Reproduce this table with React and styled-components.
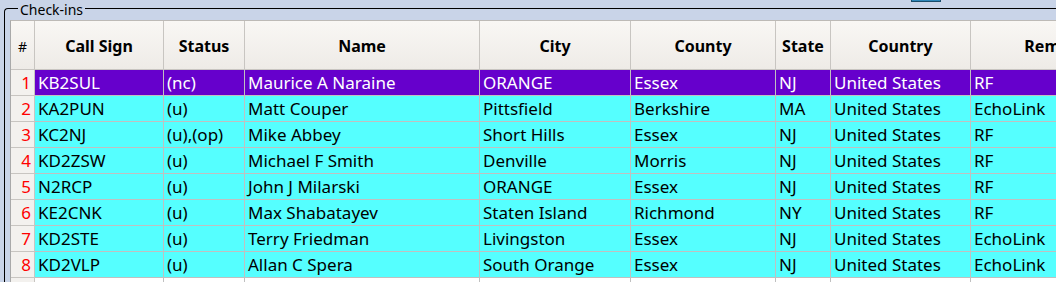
import React from "react";
import styled, { createGlobalStyle } from "styled-components";

const GlobalStyle = createGlobalStyle`
    html, body {
        margin: 0;
        padding: 0;
        background: #c9d4e8;
        overflow: hidden;
    }
    body {
        font-family: "Noto Sans", "DejaVu Sans", sans-serif;
        width: 1056px;
        height: 282px;
    }
`;

const Page = styled.div`
    width: 1056px;
    height: 282px;
    overflow: hidden;
`;

// trozo de boton que asoma arriba
const TopStrip = styled.div`
    height: 0;
    overflow: visible;
    position: relative;
    z-index: 2;

    span{
        display: block;
        margin-left: 911px;
        width: 30px;
        height: 2px;
        background: #2e86b8;
        border: 1px solid #1b4d6b;
        border-top: none;
        box-sizing: border-box;
    }
`;

const Group = styled.fieldset`
    margin: -2px 0 0 4px;
    padding: 2px 0 0 5px;
    border: 1px solid #000;
    border-right: none;
    border-bottom: none;
    border-top-left-radius: 4px;
    min-width: 0;
    height: 300px;
    box-sizing: border-box;

    legend{
        margin-left: 8px;
        padding: 4px 2px 0;
        font-size: 14px;
        line-height: 16px;
        color: #000;
    }
`;

const COLS = "24px 129px 81px 235px 151px 145px 55px 140px 178px";

const Grid = styled.div`
    border-top: 1px solid #bdbab6;
    border-left: 1px solid #a9a9a9;
    background: #fff;
    width: max-content;
`;

const Row = styled.div`
    display: grid;
    grid-template-columns: ${COLS};
    height: ${p => p.$h}px;
`;

const HeadCell = styled.div`
    display: flex;
    align-items: center;
    justify-content: center;
    box-sizing: border-box;
    padding-top: 2px;
    background: linear-gradient(#f9f7f4, #eeebe7);
    border-right: 1px solid #c8c5c1;
    border-bottom: 1px solid #c8c5c1;
    font-size: ${p => p.$small ? 14 : 16}px;
    font-weight: ${p => p.$small ? 400 : 700};
    color: #000;
    white-space: nowrap;
    overflow: hidden;
`;

const NumCell = styled.div`
    display: flex;
    align-items: center;
    justify-content: flex-end;
    box-sizing: border-box;
    padding-right: 3px;
    background: #f3f1ee;
    border-right: 1px solid #c8c5c1;
    border-bottom: 1px solid #c8c5c1;
    color: #ff0000;
    font-size: 17px;
`;

const Cell = styled.div`
    display: flex;
    align-items: center;
    box-sizing: border-box;
    padding-left: 3px;
    background: ${p => p.$sel ? "#6600cc" : p.$empty ? "#fff" : "#55ffff"};
    color: ${p => p.$sel ? "#fff" : "#000"};
    border-right: 1px solid #c0c0c0;
    border-bottom: 1px solid #c0c0c0;
    font-size: 17px;
    white-space: nowrap;
    overflow: hidden;
`;

const headers = ["Call Sign", "Status", "Name", "City", "County", "State", "Country", "Remarks"];

const rows = [
    ["KB2SUL", "(nc)", "Maurice A Naraine", "ORANGE", "Essex", "NJ", "United States", "RF"],
    ["KA2PUN", "(u)", "Matt Couper", "Pittsfield", "Berkshire", "MA", "United States", "EchoLink"],
    ["KC2NJ", "(u),(op)", "Mike Abbey", "Short Hills", "Essex", "NJ", "United States", "RF"],
    ["KD2ZSW", "(u)", "Michael F Smith", "Denville", "Morris", "NJ", "United States", "RF"],
    ["N2RCP", "(u)", "John J Milarski", "ORANGE", "Essex", "NJ", "United States", "RF"],
    ["KE2CNK", "(u)", "Max Shabatayev", "Staten Island", "Richmond", "NY", "United States", "RF"],
    ["KD2STE", "(u)", "Terry Friedman", "Livingston", "Essex", "NJ", "United States", "EchoLink"],
    ["KD2VLP", "(u)", "Allan C Spera", "South Orange", "Essex", "NJ", "United States", "EchoLink"],
];

const App = () => {
    return (
        <Page>
            <GlobalStyle />
            <TopStrip><span /></TopStrip>
            <Group>
                <legend>Check-ins</legend>
                <Grid>
                    <Row $h={49}>
                        <HeadCell $small>#</HeadCell>
                        {headers.map(h => <HeadCell key={h}>{h}</HeadCell>)}
                    </Row>
                    {rows.map((r, i) => (
                        <Row $h={26} key={i}>
                            <NumCell>{i + 1}</NumCell>
                            {r.map((c, j) => <Cell key={j} $sel={i === 0}>{c}</Cell>)}
                        </Row>
                    ))}
                    <Row $h={26}>
                        <NumCell />
                        {headers.map(h => <Cell key={h} $empty />)}
                    </Row>
                </Grid>
            </Group>
        </Page>
    );
};

export default App;
